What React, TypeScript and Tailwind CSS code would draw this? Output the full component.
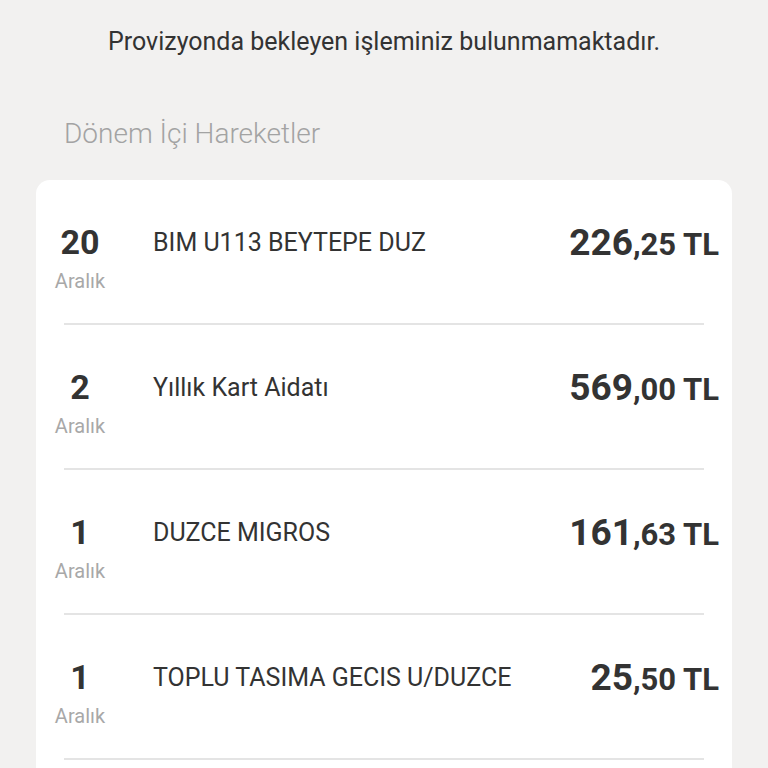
const rows = [
  { day: '20', title: 'BIM U113 BEYTEPE DUZ', int: '226', dec: ',25 TL' },
  { day: '2', title: 'Yıllık Kart Aidatı', int: '569', dec: ',00 TL' },
  { day: '1', title: 'DUZCE MIGROS', int: '161', dec: ',63 TL' },
  { day: '1', title: 'TOPLU TASIMA GECIS U/DUZCE', int: '25', dec: ',50 TL' },
];

export default function App() {
  return (
    <div
      className="w-[768px] h-[768px] overflow-hidden bg-[#f2f1f0]"
      style={{ fontFamily: 'Roboto, "Noto Sans", sans-serif' }}
    >
      <p className="pt-[26px] text-center text-[25px] leading-[32px] text-[#333333]">
        Provizyonda bekleyen işleminiz bulunmamaktadır.
      </p>

      <h2 className="mt-[58px] pl-[64px] text-[28px] leading-[36px] font-light text-[#a3a3a3]">
        Dönem İçi Hareketler
      </h2>

      <div className="mx-[36px] mt-[28px] pb-[60px] bg-white rounded-[14px]">
        {rows.map((r, i) => (
          <div key={i} className="h-[145px] flex flex-col">
            <div className="flex items-start pt-[42px] pl-[18px] pr-[13px] flex-1">
              <div className="w-[52px] flex flex-col items-center">
                <span className="text-[34px] leading-[40px] font-bold text-[#333333]">{r.day}</span>
                <span className="text-[20px] leading-[26px] text-[#a8a8a8] mt-[6px]">Aralık</span>
              </div>
              <div className="ml-[47px] pt-[5px] flex-1 text-[25px] leading-[32px] text-[#333333]">
                {r.title}
              </div>
              <div className="pt-[1px] font-bold text-[#333333] whitespace-nowrap leading-[40px]">
                <span className="text-[37px]">{r.int}</span>
                <span className="text-[31px]">{r.dec}</span>
              </div>
            </div>
            <div className="mx-[28px] h-[2px] bg-[#e4e4e4]" />
          </div>
        ))}
      </div>
    </div>
  );
}
